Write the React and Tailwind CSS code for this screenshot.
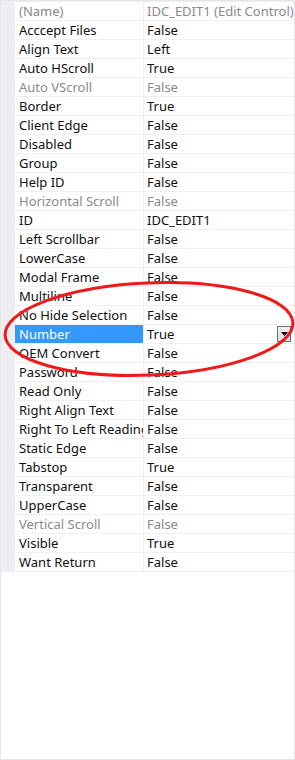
import React from "react";

const rows = [
  ["(Name)", "IDC_EDIT1 (Edit Control)", "gray"],
  ["Acccept Files", "False"],
  ["Align Text", "Left"],
  ["Auto HScroll", "True"],
  ["Auto VScroll", "False", "gray"],
  ["Border", "True"],
  ["Client Edge", "False"],
  ["Disabled", "False"],
  ["Group", "False"],
  ["Help ID", "False"],
  ["Horizontal Scroll", "False", "gray"],
  ["ID", "IDC_EDIT1"],
  ["Left Scrollbar", "False"],
  ["LowerCase", "False"],
  ["Modal Frame", "False"],
  ["Multiline", "False"],
  ["No Hide Selection", "False"],
  ["Number", "True", "sel"],
  ["OEM Convert", "False"],
  ["Password", "False"],
  ["Read Only", "False"],
  ["Right Align Text", "False"],
  ["Right To Left Reading", "False"],
  ["Static Edge", "False"],
  ["Tabstop", "True"],
  ["Transparent", "False"],
  ["UpperCase", "False"],
  ["Vertical Scroll", "False", "gray"],
  ["Visible", "True"],
  ["Want Return", "False"],
];

function Row({ name, value, kind }) {
  const gray = kind === "gray";
  const sel = kind === "sel";
  return (
    <div className="flex h-[19px]">
      <div className="w-[14px] shrink-0 bg-[#eeeef2]" />
      <div
        className={
          sel
            ? "w-[128px] shrink-0 overflow-hidden whitespace-nowrap border-b border-[#f0f0f0] bg-[#3399ff] pl-[4px] pt-[1px] leading-[17px] text-white"
            : gray
            ? "w-[128px] shrink-0 overflow-hidden whitespace-nowrap border-b border-[#f0f0f0] pl-[4px] pt-[1px] leading-[17px] text-[#8a8a8a]"
            : "w-[128px] shrink-0 overflow-hidden whitespace-nowrap border-b border-[#f0f0f0] pl-[4px] pt-[1px] leading-[17px] text-[#101010]"
        }
      >
        {name}
      </div>
      <div className="w-[1px] shrink-0 bg-[#f0f0f0]" />
      <div
        className={
          gray
            ? "flex flex-1 items-center overflow-hidden whitespace-nowrap border-b border-[#f0f0f0] pl-[3px] text-[#8a8a8a]"
            : "flex flex-1 items-center overflow-hidden whitespace-nowrap border-b border-[#f0f0f0] pl-[3px] text-[#101010]"
        }
      >
        <span className="flex-1 pt-[1px] leading-[17px]">{value}</span>
        {sel && (
          <div className="mr-[3px] flex h-[16px] w-[14px] items-center justify-center border border-[#707070] bg-gradient-to-b from-[#f2f2f2] to-[#dcdcdc]">
            <svg width="7" height="4" viewBox="0 0 7 4">
              <polygon points="0,0 7,0 3.5,4" fill="#000" />
            </svg>
          </div>
        )}
      </div>
    </div>
  );
}

export default function App() {
  return (
    <div
      className="relative h-[760px] w-[295px] border border-[#e6e6e6] bg-white text-[13px]"
      style={{ fontFamily: '"Noto Sans", "Noto Sans CJK SC", sans-serif' }}
    >
      <div className="h-[1px] bg-[#eeeef2]" />
      {rows.map(([n, v, k]) => (
        <Row key={n} name={n} value={v} kind={k} />
      ))}
      <svg
        className="pointer-events-none absolute left-[-1px] top-[-1px]"
        width="295"
        height="760"
      >
        <ellipse
          cx="149"
          cy="329"
          rx="144"
          ry="46"
          transform="rotate(-2.5 149 329)"
          fill="none"
          stroke="#f01818"
          strokeWidth="3"
        />
      </svg>
    </div>
  );
}
